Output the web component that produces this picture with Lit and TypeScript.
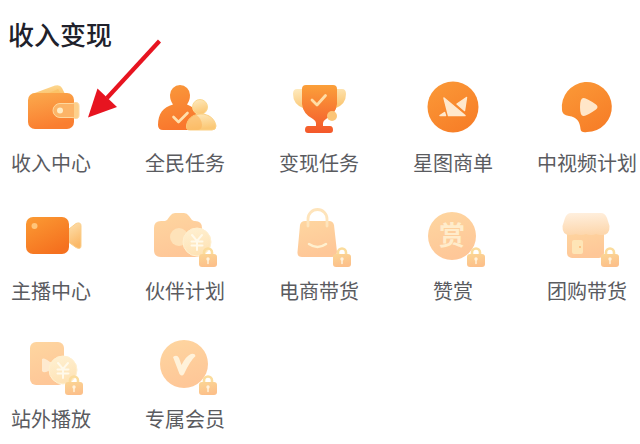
import { LitElement, html, svg, css } from "lit";
import type { SVGTemplateResult } from "lit";
import { customElement } from "lit/decorators.js";

interface Entry {
  label: string;
  icon: SVGTemplateResult;
  locked?: boolean;
}

const coin = svg`
  <circle cx="52" cy="38" r="14" fill="url(#coin)" stroke="#fff0cf" stroke-width="1"/>
  <path d="M47 31L52 37L57 31M52 37V46M46.500 37.500H57.500M46.500 41.500H57.500" fill="none" stroke="#fff9ea" stroke-width="2" stroke-linecap="round"/>`;

const lock = svg`
  <path d="M59 51V48.500a4 4 0 0 1 8 0V51" fill="none" stroke="#fbdc9c" stroke-width="2.600"/>
  <rect x="54" y="50" width="18" height="13" rx="3" fill="url(#lock)"/>
  <circle cx="63" cy="55" r="1.700" fill="#fff2dc"/>
  <path d="M63 55V59.500" stroke="#fff2dc" stroke-width="1.500" stroke-linecap="round"/>`;

const entries: Entry[] = [
  {
    label: "收入中心",
    icon: svg`
      <path d="M21 18L44 9.600Q49 8 51 12L54 18Z" fill="url(#cream)"/>
      <path d="M36 18L47 13L50 18Z" fill="#fbc368"/>
      <rect x="17" y="17" width="46" height="36" rx="7" fill="url(#wallet)"/>
      <path d="M49 27.500H61Q63 27.500 64 26.500Q68 26 68 30V39Q68 43 64 42.500Q63 41.500 61 41.500H49a7 7 0 0 1 0-14Z" fill="#fdd08b" stroke="#fdd89e" stroke-width="1"/>
      <path d="M49 28H63V41H49a6.500 6.500 0 0 1 0-13Z" fill="#fcb467"/>
      <circle cx="49" cy="34.500" r="3" fill="#ffedc6"/>`,
  },
  {
    label: "全民任务",
    icon: svg`
      <path d="M18 54Q13 54 13 49C13 38 18 31 28 28.500Q25 24.500 25 19a10 10 0 0 1 20 0Q45 24.500 42 28.500C51 32 57 39 57 49Q57 54 52 54Z" fill="url(#hot)"/>
      <circle cx="55" cy="31" r="7.500" fill="url(#pale)" stroke="#fbd991" stroke-width="1"/>
      <path d="M45 54Q41 54 41.500 50C42 43 48 38 56 38C64 38 70 43 71 50Q71 54 67 54Z" fill="url(#pale)" stroke="#fbd083" stroke-width="1"/>
      <path d="M45 54Q41 54 41.500 50C42 44 46 40 51 38.500Q57 43 57 49Q57 54 52 54Z" fill="#fbb45c" opacity="0.600"/>
      <path d="M28.500 41L33.500 46L42.500 37" fill="none" stroke="#ffdfad" stroke-width="2.600" stroke-linecap="round" stroke-linejoin="round"/>`,
  },
  {
    label: "变现任务",
    icon: svg`
      <path d="M24 13H18Q14 13 14 18Q14 28 24 32ZM57 13H63Q67 13 67 18Q67 28 57 32Z" fill="url(#pale)"/>
      <path d="M27 9H54Q58 9 58 13V28Q57 38 47 43Q44 45 44 47V50H51Q54 50 54 54Q54 57 51 57H29Q26 57 26 54Q26 50 29 50H37V47Q37 45 34 43Q24 38 23 28V13Q23 9 27 9Z" fill="url(#trophy)"/>
      <circle cx="53" cy="40" r="5" fill="#fbc578"/>
      <path d="M33 24L38 29L46.500 19.500" fill="none" stroke="#ffdda5" stroke-width="2.800" stroke-linecap="round" stroke-linejoin="round"/>`,
  },
  {
    label: "星图商单",
    icon: svg`
      <circle cx="40" cy="31" r="25.500" fill="url(#round)"/>
      <g fill="#ffe8cc" stroke="#ffe8cc" stroke-width="1.500" stroke-linejoin="round">
        <path d="M31 22L52 39.500H35.500Z"/>
        <path d="M53.500 21.500L44 28L51.500 34.500Z"/>
        <path d="M27 39.500L31.500 36.500L32.500 39.500Z"/>
      </g>`,
  },
  {
    label: "中视频计划",
    icon: svg`
      <path d="M15 34A25 25 0 1 1 40 56Q34 57 33.500 53C33 46 30 41 22 40Q15 39 15 34Z" fill="url(#round)"/>
      <path d="M36.500 22Q39 21.500 49 28.500Q52 31 49 33.500Q39 40.500 36.500 40Q33 40 33 31Q33 22 36.500 22Z" fill="#ffe6c8"/>`,
  },
  {
    label: "主播中心",
    icon: svg`
      <path d="M58 25L65 19.500Q70 17.500 70 22V42Q70 46 65 43.500L58 38.500Z" fill="url(#lens)" stroke="#fbcf8b" stroke-width="1"/>
      <rect x="15" y="13" width="43" height="37" rx="7" fill="url(#video)"/>
      <circle cx="23.500" cy="22" r="3" fill="#ffc57a"/>`,
  },
  {
    label: "伙伴计划",
    locked: true,
    icon: svg`
      <path d="M16 17H20Q22 17 23.500 14L25 12Q27 9 30 9H39Q42 9 44 12L45.500 14Q47 17 49 17H50Q57 17 57 24V46Q57 53 50 53H16Q9 53 9 46V24Q9 17 16 17Z" fill="url(#soft)"/>
      <circle cx="34" cy="33" r="9" fill="#fee2b9"/>
      ${coin}`,
  },
  {
    label: "电商带货",
    locked: true,
    icon: svg`
      <path d="M26 17H50Q54 17 55 21L58 48Q58 53 53 53H23Q18 53 18.500 48L21 21Q22 17 26 17Z" fill="url(#soft)"/>
      <path d="M29 22V15a9.500 9.500 0 0 1 19 0V22" fill="none" stroke="#fee4bb" stroke-width="2.800" stroke-linecap="round"/>
      <path d="M30 40Q38.500 46 47 40" fill="none" stroke="#fff0cf" stroke-width="2.500" stroke-linecap="round"/>`,
  },
  {
    label: "赞赏",
    locked: true,
    icon: svg`
      <circle cx="39" cy="32" r="24" fill="url(#soft)"/>
      <text class="glyph" x="39" y="41" text-anchor="middle">赏</text>`,
  },
  {
    label: "团购带货",
    locked: true,
    icon: svg`
      <rect x="20" y="24" width="37" height="30" rx="5" fill="url(#soft)"/>
      <path d="M24 9H54Q58 9 60 14L62.500 22Q63 31 55 31Q52 31 49 30Q44 32 39 30Q34 32 29 30Q26 31 23 31Q15 31 15.500 22L18 14Q20 9 24 9Z" fill="url(#roof)"/>
      <rect x="25" y="36" width="11" height="14" rx="2" fill="#fee5b6"/>
      <circle cx="33" cy="43" r="1" fill="#fbb877"/>`,
  },
  {
    label: "站外播放",
    locked: true,
    icon: svg`
      <rect x="19" y="10" width="34" height="43" rx="6" fill="url(#soft)"/>
      <path d="M31 27Q33 25 39 30H46V38H39Q33 42 31 39Z" fill="#feead0"/>
      ${coin}`,
  },
  {
    label: "专属会员",
    locked: true,
    icon: svg`
      <circle cx="39" cy="32" r="24" fill="url(#soft)"/>
      <path d="M28 25Q32 22 34 26L36.500 33Q41 24 46 22Q50 21 50.500 24Q45 29 39 42Q37 45 34.500 42Z" fill="#fff2da"/>`,
  },
];

function gradient(id: string, from: string, to: string, x2 = 0.3) {
  return svg`<linearGradient id=${id} x1="0" y1="0" x2=${x2} y2="1">
    <stop offset="0" stop-color=${from}/><stop offset="1" stop-color=${to}/>
  </linearGradient>`;
}

@customElement("app-root")
export class AppRoot extends LitElement {
  static styles = css`
    :host {
      display: block;
      position: relative;
      min-height: 100vh;
      box-sizing: border-box;
      padding: 14px 2px 8px 0;
      overflow: hidden;
      background: #fff;
      font-family: "Noto Sans CJK SC", sans-serif;
    }
    .defs {
      position: absolute;
      width: 0;
      height: 0;
    }
    .title {
      margin: 0 0 22px;
      padding-left: 8px;
      font-size: 26px;
      line-height: 40px;
      font-weight: 500;
      color: #20212b;
    }
    .grid {
      display: grid;
      grid-template-columns: repeat(5, 102px);
      justify-content: space-between;
      row-gap: 26px;
      margin: 0;
      padding: 0;
      list-style: none;
    }
    .entry {
      display: flex;
      flex-direction: column;
      align-items: center;
      gap: 8px;
      color: #5a5b5f;
      font-size: 20px;
      line-height: 30px;
      white-space: nowrap;
      text-decoration: none;
    }
    .icon {
      display: block;
      width: 80px;
      height: 64px;
    }
    .glyph {
      font-size: 26px;
      font-weight: 700;
      fill: #ffeccb;
    }
    .arrow {
      position: absolute;
      left: 87px;
      top: 38px;
      width: 76px;
      height: 82px;
      pointer-events: none;
    }
  `;

  render() {
    return html`
      <svg class="defs" aria-hidden="true">
        <defs>
          ${gradient("wallet", "#fbaa4d", "#fa7e30")}
          ${gradient("hot", "#f99a3c", "#f9772d")}
          ${gradient("trophy", "#fba03a", "#f4582b", 0)}
          ${gradient("round", "#fb9a38", "#f77f28", 0.6)}
          ${gradient("video", "#fb9b34", "#f5711f", 0.6)}
          ${gradient("cream", "#fddc98", "#fbc673")}
          ${gradient("pale", "#feebc0", "#fbc876")}
          ${gradient("lens", "#fde0ae", "#fbb866")}
          ${gradient("soft", "#fed6a0", "#fec798")}
          ${gradient("roof", "#fff0df", "#fdd7ad", 0.1)}
          ${gradient("coin", "#fff1d3", "#fee3b6")}
          ${gradient("lock", "#fbd594", "#fcc08a")}
        </defs>
      </svg>
      <h1 class="title">收入变现</h1>
      <ul class="grid">
        ${entries.map(
          (e) => html`<li>
            <a class="entry" href="#">
              <svg class="icon" viewBox="0 0 80 64" aria-hidden="true">
                ${e.icon}${e.locked ? lock : null}
              </svg>
              <span>${e.label}</span>
            </a>
          </li>`
        )}
      </ul>
      <svg class="arrow" viewBox="0 0 76 82" aria-hidden="true">
        <path d="M72.500 3L20 60" stroke="#e71420" stroke-width="4.200"/>
        <path d="M1 79.500L10.500 50.500L30 69Z" fill="#e71420"/>
      </svg>
    `;
  }
}
